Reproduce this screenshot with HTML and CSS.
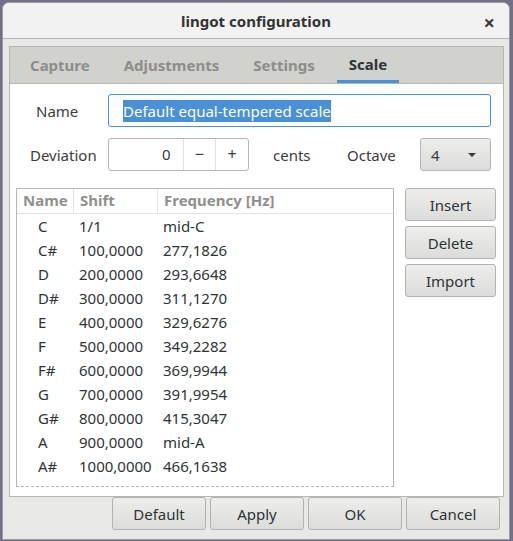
FILE: index.html
```html
<!DOCTYPE html>
<html>
<head>
<meta charset="utf-8">
<link rel="stylesheet" href="styles.css">
</head>
<body>
<div class="window">
  <div class="titlebar">
    <span class="title">lingot configuration</span>
    <span class="close">×</span>
  </div>
  <div class="body">
    <div class="notebook">
      <div class="tabs">
        <span class="tab t1">Capture</span>
        <span class="tab">Adjustments</span>
        <span class="tab">Settings</span>
        <span class="tab active">Scale</span>
      </div>
      <div class="page">
        <div class="row name-row">
          <span class="lbl name-lbl">Name</span>
          <div class="entry focused"><span class="sel">Default equal-tempered scale</span></div>
        </div>
        <div class="row dev-row">
          <span class="lbl dev-lbl">Deviation</span>
          <div class="spin">
            <span class="spin-val">0</span>
            <span class="spin-btn">−</span>
            <span class="spin-btn">+</span>
          </div>
          <span class="cents">cents</span>
          <span class="octave">Octave</span>
          <div class="combo"><span>4</span><span class="arrow"></span></div>
        </div>
        <div class="main">
          <div class="tree">
            <div class="thead">
              <span class="c1">Name</span><span class="c2">Shift</span><span class="c3">Frequency [Hz]</span>
            </div>
            <div class="tbody">
              <div class="tr"><span class="c1">C</span><span class="c2">1/1</span><span class="c3">mid-C</span></div>
              <div class="tr"><span class="c1">C#</span><span class="c2">100,0000</span><span class="c3">277,1826</span></div>
              <div class="tr"><span class="c1">D</span><span class="c2">200,0000</span><span class="c3">293,6648</span></div>
              <div class="tr"><span class="c1">D#</span><span class="c2">300,0000</span><span class="c3">311,1270</span></div>
              <div class="tr"><span class="c1">E</span><span class="c2">400,0000</span><span class="c3">329,6276</span></div>
              <div class="tr"><span class="c1">F</span><span class="c2">500,0000</span><span class="c3">349,2282</span></div>
              <div class="tr"><span class="c1">F#</span><span class="c2">600,0000</span><span class="c3">369,9944</span></div>
              <div class="tr"><span class="c1">G</span><span class="c2">700,0000</span><span class="c3">391,9954</span></div>
              <div class="tr"><span class="c1">G#</span><span class="c2">800,0000</span><span class="c3">415,3047</span></div>
              <div class="tr"><span class="c1">A</span><span class="c2">900,0000</span><span class="c3">mid-A</span></div>
              <div class="tr"><span class="c1">A#</span><span class="c2">1000,0000</span><span class="c3">466,1638</span></div>
            </div>
          </div>
          <div class="side">
            <div class="btn">Insert</div>
            <div class="btn">Delete</div>
            <div class="btn">Import</div>
          </div>
        </div>
      </div>
    </div>
    <div class="actions">
      <div class="btn abtn">Default</div>
      <div class="btn abtn">Apply</div>
      <div class="btn abtn">OK</div>
      <div class="btn abtn">Cancel</div>
    </div>
  </div>
</div>
</body>
</html>
```

FILE: styles.css
```css
* { box-sizing: border-box; }
html, body { margin: 0; padding: 0; }
body {
  background: #746f88;
  width: 513px;
  height: 541px;
  overflow: hidden;
  font-family: "Noto Sans", "Open Sans", sans-serif;
  font-size: 15px;
  color: #3c3c3c;
}
.window {
  margin: 2px 0 0 2px;
  width: 508px;
  height: 538px;
  border: 1px solid #9c9c9c;
  border-radius: 7px 7px 0 0;
  background: #e8e8e7;
  overflow: hidden;
}
.titlebar {
  height: 36px;
  background: #f2f2f2;
  border-bottom: 1px solid #b4b4b2;
  position: relative;
  display: flex;
  align-items: center;
  justify-content: center;
}
.title {
  font-weight: bold;
  font-size: 15px;
  color: #333;
}
.close {
  position: absolute;
  right: 14px;
  top: 6px;
  font-size: 20px;
  font-weight: bold;
  color: #3a3a3a;
}
.body {
  padding: 7px 5px 0 6px;
}
.notebook {
  width: 495px;
  height: 451px;
  border: 1px solid #b6b6b3;
  background: #fff;
}
.tabs {
  height: 37px;
  background: #d1d1ce;
  display: flex;
  gap: 10px;
  border-bottom: 1px solid #b6b6b3;
}
.tab {
  font-weight: bold;
  color: #8d8d8b;
  height: 36px;
  line-height: 36px;
  padding: 0 12px;
}
.t1 { margin-left: 8px; }
.tab.active {
  color: #2e3436;
  border-bottom: 3px solid #4a90d9;
  line-height: 34px;
  height: 36px;
}
.page {
  padding: 10px 0 0 0;
}
.row {
  display: flex;
  align-items: center;
}
.name-lbl { margin-left: 26px; width: 72px; }
.entry {
  width: 383px;
  height: 33px;
  border: 1px solid #b6b6b3;
  border-radius: 3px;
  background: #fff;
  display: flex;
  align-items: center;
  padding-left: 14px;
}
.entry.focused { border-color: #4a90d9; }
.sel {
  background: #4a90d9;
  color: #fff;
  line-height: 22px;
}
.dev-row { margin-top: 11px; }
.dev-lbl { margin-left: 20px; width: 78px; }
.spin {
  display: flex;
  width: 141px;
  height: 33px;
  border: 1px solid #b6b6b3;
  border-radius: 3px;
  background: #fff;
}
.spin-val {
  width: 74px;
  text-align: right;
  padding-right: 12px;
  line-height: 31px;
}
.spin-btn {
  width: 33px;
  border-left: 1px solid #e0e0de;
  text-align: center;
  line-height: 30px;
  font-size: 16px;
}
.cents { margin-left: 24px; width: 38px; }
.octave { margin-left: 36px; width: 50px; }
.combo {
  margin-left: 23px;
  width: 71px;
  height: 33px;
  border: 1px solid #b6b6b3;
  border-radius: 3px;
  background: linear-gradient(#ededec, #dcdcda);
  display: flex;
  align-items: center;
  justify-content: space-between;
  padding: 0 14px 0 10px;
}
.arrow {
  width: 0; height: 0;
  border-left: 4px solid transparent;
  border-right: 4px solid transparent;
  border-top: 4px solid #3a3a3a;
}
.main {
  display: flex;
  margin-top: 17px;
  padding-left: 6px;
}
.tree {
  width: 378px;
  height: 299px;
  border: 1px solid #b6b6b3;
  border-bottom: 1px dashed #b6b6b3;
  background: #fff;
  overflow: hidden;
}
.thead {
  display: flex;
  height: 25px;
  border-bottom: 1px solid #e2e2e0;
  font-weight: bold;
  color: #8f8f8d;
  line-height: 23px;
}
.thead span { padding-left: 6px; }
.thead .c1 { width: 57px; border-right: 1px solid #e2e2e0; }
.thead .c2 { width: 84px; border-right: 1px solid #e2e2e0; }
.tr {
  display: flex;
  height: 24px;
  line-height: 24px;
  color: #2e3436;
}
.tr .c1 { width: 57px; padding-left: 21px; }
.tr .c2 { width: 84px; padding-left: 5px; }
.tr .c3 { padding-left: 5px; }
.tbody { padding-top: 0; }
.side {
  margin-left: 11px;
  display: flex;
  flex-direction: column;
  gap: 5px;
}
.btn {
  width: 91px;
  height: 33px;
  border: 1px solid #b2b2b0;
  border-radius: 3px;
  background: linear-gradient(#ededec, #dcdcda);
  display: flex;
  align-items: center;
  justify-content: center;
  color: #2e3436;
}
.actions {
  display: flex;
  gap: 4px;
  padding-left: 103px;
  margin-top: 0;
}
.abtn { width: 94px; }
```
